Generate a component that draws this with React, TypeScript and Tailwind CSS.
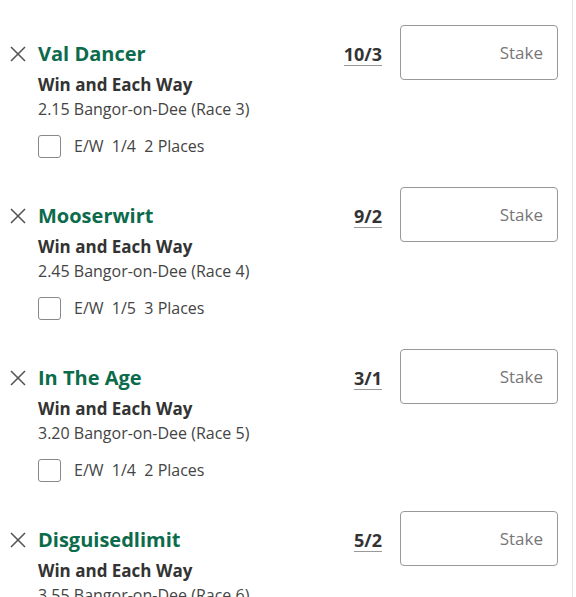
import React from 'react';

const bets = [
  { name: 'Val Dancer', odds: '10/3', time: '2.15', race: 3, terms: '1/4', places: 2 },
  { name: 'Mooserwirt', odds: '9/2', time: '2.45', race: 4, terms: '1/5', places: 3 },
  { name: 'In The Age', odds: '3/1', time: '3.20', race: 5, terms: '1/4', places: 2 },
  { name: 'Disguisedlimit', odds: '5/2', time: '3.55', race: 6, terms: '1/4', places: 2 },
];

function CloseIcon() {
  return (
    <svg className="w-[18px] h-[18px] text-[#555]" viewBox="0 0 18 18" fill="none" stroke="currentColor" strokeWidth="1.6">
      <line x1="2" y1="2" x2="16" y2="16" />
      <line x1="16" y1="2" x2="2" y2="16" />
    </svg>
  );
}

export default function App() {
  return (
    <div className="h-[597px] w-[576px] overflow-hidden bg-white" style={{ fontFamily: '"Open Sans", "Noto Sans", sans-serif' }}>
      <div className="w-[573px] h-full border-r border-[#e6e6e6] pt-[25px]">
        {bets.map((bet) => (
          <div key={bet.name} className="flex items-start pb-[29px]">
            <div className="flex-1 pt-[15px]">
              <div className="flex items-center h-[28px] pl-[9px]">
                <CloseIcon />
                <div className="ml-[11px] text-[20px] font-bold text-[#0b6b4b]">{bet.name}</div>
                <div className="flex-1" />
                <div className="text-[18px] font-bold text-[#333] leading-[22px] border-b border-[#999]">{bet.odds}</div>
              </div>
              <div className="pl-[38px]">
                <div className="mt-[6px] text-[17px] font-bold text-[#333] leading-[22px]">Win and Each Way</div>
                <div className="mt-[2px] text-[16px] text-[#444] leading-[22px]">
                  {bet.time} Bangor-on-Dee (Race {bet.race})
                </div>
                <div className="mt-[14px] flex items-center">
                  <div className="w-[23px] h-[23px] border border-[#888] rounded-[3px] bg-white" />
                  <div className="ml-[13px] text-[16px] text-[#444] whitespace-pre">
                    {`E/W  ${bet.terms}  ${bet.places} Places`}
                  </div>
                </div>
              </div>
            </div>
            <div className="ml-[18px] mr-[14px] w-[158px] h-[55px] border border-[#999] rounded-[4px] flex items-center justify-end pr-[14px]">
              <span className="text-[17px] text-[#777]">Stake</span>
            </div>
          </div>
        ))}
      </div>
    </div>
  );
}
